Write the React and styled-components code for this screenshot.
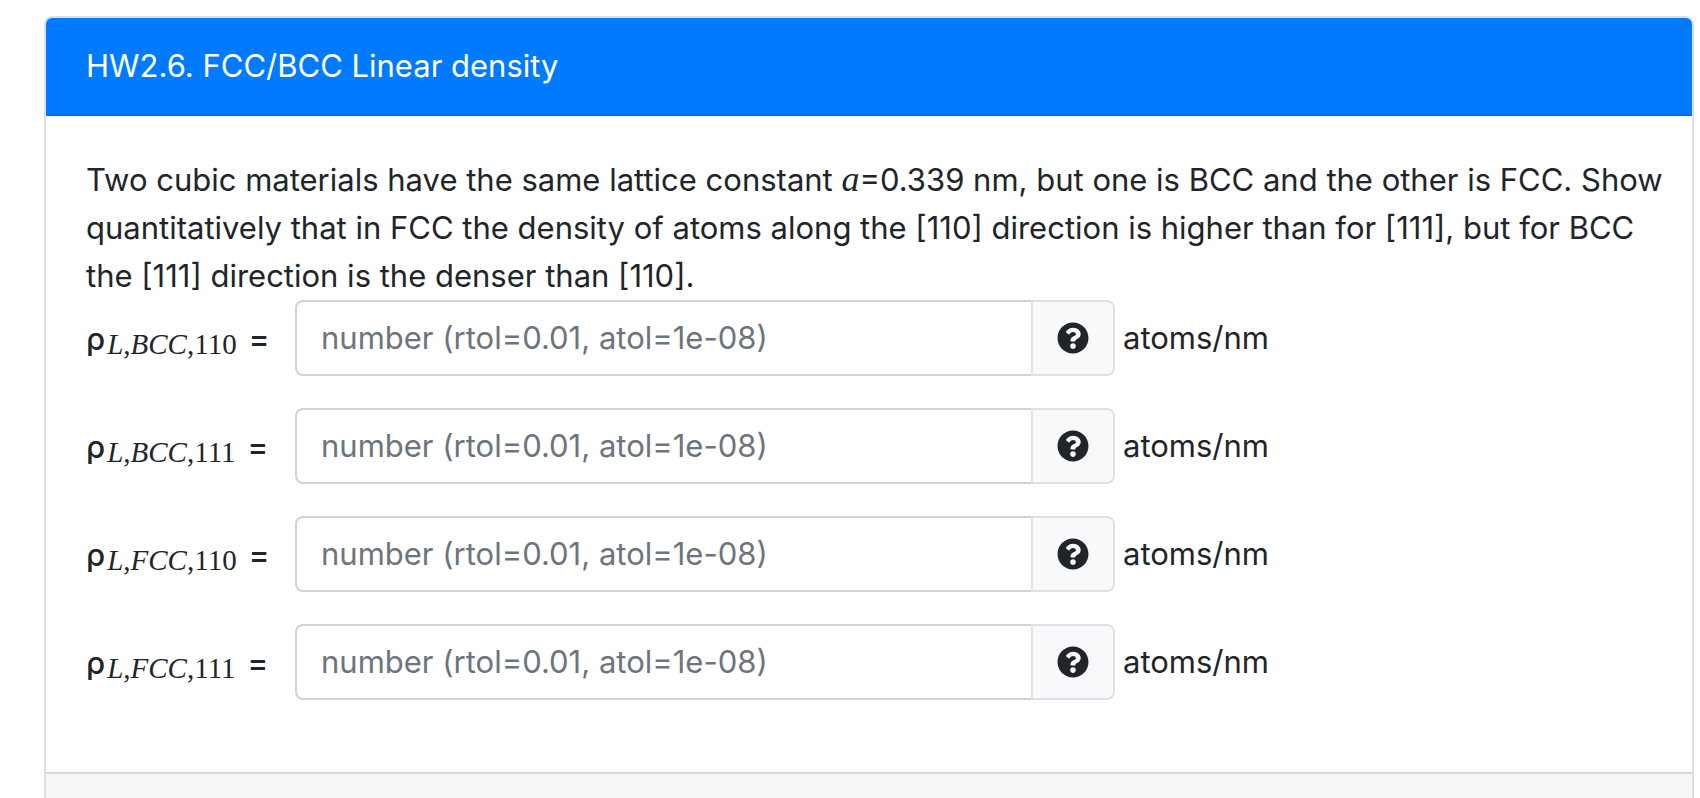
import React from 'react';
import styled, { createGlobalStyle } from 'styled-components';
import { FaQuestionCircle } from 'react-icons/fa';

const GlobalStyle = createGlobalStyle`
  *, *::before, *::after {
    box-sizing: border-box;
  }

  body {
    margin: 0;
    background: #fff;
    color: #212529;
    font-family: Inter, 'Liberation Sans', sans-serif;
    font-size: 31px;
    line-height: 48px;
  }
`;

const Page = styled.main`
  display: flex;
  min-height: 100vh;
  padding: 16px 6px 0 44px;
`;

const Card = styled.section`
  display: flex;
  flex: 1;
  flex-direction: column;
  min-width: 0;
  border: 2px solid #dfdfdf;
  border-bottom: 0;
  border-radius: 8px 8px 0 0;
  overflow: hidden;
`;

const CardHeader = styled.h1`
  margin: 0;
  padding: 24px 40px;
  border-bottom: 2px solid #006fdf;
  background: #007bff;
  color: #fff;
  font-size: inherit;
  font-weight: 400;
`;

const CardBody = styled.form`
  padding: 40px 24px 40px 40px;
`;

const CardFooter = styled.footer`
  flex: 1;
  min-height: 24px;
  border-top: 2px solid #d8d8d8;
  background: #f7f7f7;
`;

const Prompt = styled.p`
  margin: 0;
`;

const Variable = styled.i`
  font-family: 'Liberation Serif', serif;
  font-size: 36px;
  line-height: 1;
`;

const Answers = styled.div`
  display: flex;
  flex-direction: column;
  gap: 32px;
`;

const Row = styled.div`
  display: flex;
  align-items: center;
`;

const Label = styled.label`
  flex: none;
  width: 209px;
  padding-top: 2px;
  font-weight: 500;
  white-space: nowrap;
`;

const Subscript = styled.sub`
  position: relative;
  top: 4px;
  margin: 0 12px 0 2px;
  font-family: 'Liberation Serif', serif;
  font-size: 29px;
  font-weight: 400;
  line-height: 1;
  vertical-align: baseline;
`;

const InputGroup = styled.div`
  display: flex;
  flex: 0 1 820px;
  min-width: 0;
  height: 76px;
`;

const NumberInput = styled.input`
  flex: 1;
  min-width: 0;
  padding: 12px 24px;
  border: 2px solid #ced4da;
  border-right: 0;
  border-radius: 8px 0 0 8px;
  background: #fff;
  color: #495057;
  font: inherit;

  &::placeholder {
    color: #6c757d;
    opacity: 1;
  }
`;

const HelpButton = styled.button`
  display: flex;
  flex: none;
  align-items: center;
  justify-content: center;
  width: 84px;
  padding: 0;
  border: 2px solid #dee2e6;
  border-radius: 0 8px 8px 0;
  background: #f8f9fa;
  color: #212529;
  font-size: 32px;
  cursor: pointer;
`;

const Unit = styled.span`
  margin-left: 8px;
`;

const ANSWERS = [
  { lattice: 'BCC', direction: '110' },
  { lattice: 'BCC', direction: '111' },
  { lattice: 'FCC', direction: '110' },
  { lattice: 'FCC', direction: '111' },
];

const AnswerRow = ({ lattice, direction }) => {
  const id = `rho-${lattice}-${direction}`;

  return (
    <Row>
      <Label htmlFor={id}>
        ρ
        <Subscript>
          <i>L</i>,<i>{lattice}</i>,{direction}
        </Subscript>
        =
      </Label>
      <InputGroup>
        <NumberInput id={id} type="text" placeholder="number (rtol=0.01, atol=1e-08)" />
        <HelpButton type="button" aria-label="Help">
          <FaQuestionCircle />
        </HelpButton>
      </InputGroup>
      <Unit>atoms/nm</Unit>
    </Row>
  );
};

export default function App() {
  return (
    <>
      <GlobalStyle />
      <Page>
        <Card>
          <CardHeader>HW2.6. FCC/BCC Linear density</CardHeader>
          <CardBody>
            <Prompt>
              Two cubic materials have the same lattice constant <Variable>a</Variable>=0.339 nm, but one is BCC and
              the other is FCC. Show quantitatively that in FCC the density of atoms along the [110] direction is
              higher than for [111], but for BCC the [111] direction is the denser than [110].
            </Prompt>
            <Answers>
              {ANSWERS.map(({ lattice, direction }) => (
                <AnswerRow key={lattice + direction} lattice={lattice} direction={direction} />
              ))}
            </Answers>
            <Spacer />
          </CardBody>
          <CardFooter />
        </Card>
      </Page>
    </>
  );
}

// room kept under the last answer, same as the gap between rows
const Spacer = styled.div`
  height: 32px;
`;
